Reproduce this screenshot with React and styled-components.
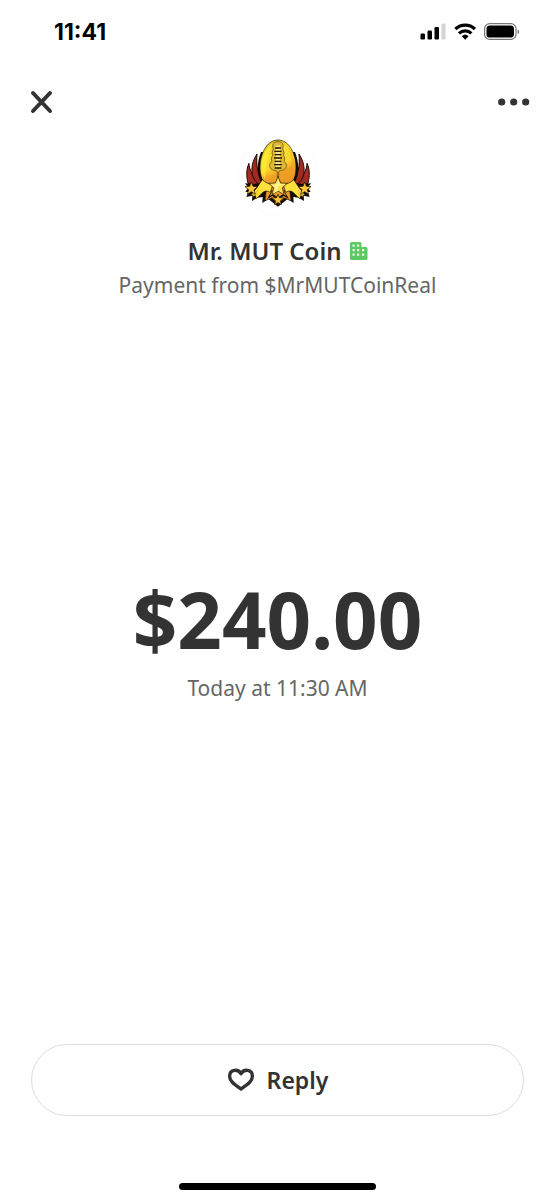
import React from 'react';
import styled, { createGlobalStyle } from 'styled-components';

const payment = {
  sender: 'Mr. MUT Coin',
  note: 'Payment from $MrMUTCoinReal',
  amount: '$240.00',
  date: 'Today at 11:30 AM',
};

const StatusIcons = () => (
  <svg width="100" height="20" viewBox="0 0 100 20" aria-hidden="true">
    <rect x="0.500" y="11.500" width="4.500" height="6" rx="1.200" />
    <rect x="7.500" y="8.500" width="4.500" height="9" rx="1.200" />
    <rect x="14.500" y="5" width="4.500" height="12.500" rx="1.200" />
    <rect x="21.500" y="1.500" width="4" height="16" rx="1.200" fill="#d4d4d4" />
    <g fill="none" stroke="#000" strokeWidth="3.200">
      <path d="M35.400 7a14.500 14.500 0 0 1 19.600 0" />
      <path d="M39 11.300a9 9 0 0 1 12.400 0" />
    </g>
    <path d="M41.800 14.200a5 5 0 0 1 6.800 0L45.200 17.800z" />
    <rect x="64.600" y="1.600" width="31.400" height="15.800" rx="5" fill="none" stroke="#777" strokeWidth="1.200" />
    <rect x="66.500" y="3.400" width="27.500" height="12.200" rx="3.400" />
    <path d="M97.600 7.200c2 1 2 4 0 5z" fill="#777" />
  </svg>
);

const FootballLogo = () => (
  <svg width="82" height="84" viewBox="0 0 246 252" aria-hidden="true">
    <defs>
      <linearGradient id="ball" x1="0.3" y1="0" x2="0.6" y2="1">
        <stop offset="0" stopColor="#dfb81c" />
        <stop offset="0.25" stopColor="#f8de2c" />
        <stop offset="0.5" stopColor="#fbd62c" />
        <stop offset="0.65" stopColor="#f2a426" />
        <stop offset="1" stopColor="#e58a1f" />
      </linearGradient>
    </defs>
    <circle cx="123" cy="125" r="119" fill="#fff" stroke="#fcf9f5" strokeWidth="2" />
    {/* side flames */}
    <g fill="#a32a20" stroke="#1d0907" strokeWidth="3" strokeLinejoin="round">
      <path d="M36 88c-9 18-8 40-3 60l30 6-4-24c-14-8-22-22-23-42z" />
      <path d="M60 60c-13 20-18 40-14 62 3 14 12 24 24 32l6-12c-14-22-19-48-16-82z" />
      <path d="M210 88c9 18 8 40 3 60l-30 6 4-24c14-8 22-22 23-42z" />
      <path d="M186 60c13 20 18 40 14 62-3 14-12 24-24 32l-6-12c14-22 19-48 16-82z" />
    </g>
    {/* dark backing with the spiked lower edge */}
    <path d="M72 54c-12 30-14 64 0 92l-20 4-28-2 10 13-9 12 9 2-6 14 18-4-1 16 16-10 16-2-1 18 18-12 29 23 29-23 18 12-1-18 16 2 16 10-1-16 18 4-6-14 9-2-9-12 10-13-28 2-20-4c14-28 12-62 0-92z" fill="#140a06" />
    {/* ball */}
    <path d="M123 18c-36 0-54 46-54 84 0 32 16 56 32 70h44c16-14 32-38 32-70 0-38-18-84-54-84z" fill="url(#ball)" stroke="#171006" strokeWidth="2" />
    <path d="M108 26c-22 14-34 46-34 74 0 14 4 26 10 36 1-16 2-36 6-54 4-20 9-38 18-56z" fill="#fff23c" opacity="0.6" />
    <path d="M150 36c12 20 16 44 12 60-14 16-34 26-54 28l-10 24 16 18h30c16-14 29-38 29-64 0-28-9-52-23-66z" fill="#ee9d25" opacity="0.5" />
    {/* laces */}
    <path d="M123 23c-14 0-18 8-14 21-4 10-5 14-2 20-5 7-5 12-2 18-8 5-9 15-4 22 5 6 14 4 20 9v16h4v-16c6-5 15-3 20-9 5-7 4-17-4-22 3-6 3-11-2-18 3-6 2-10-2-20 4-13 0-21-14-21z" fill="#dcb936" stroke="#5a4010" strokeWidth="2" />
    <g stroke="#2b1d06" strokeWidth="4">
      <path d="M114 42h18M112 52h22M113 62h20M111 72h24M113 82h20M111 92h24M113 102h20" />
    </g>
    <g stroke="#fff0a0" strokeWidth="4">
      <path d="M116 37h14M117 47h12M117 57h12M117 67h12M117 77h12M117 87h12M117 97h12" />
    </g>
    {/* lower chevrons */}
    <path d="M88 166l-4 34 20-8 19 18 19-18 20 8-4-34-35 10z" fill="#ed9926" stroke="#171006" strokeWidth="2" />
    <path d="M104 171l-14 24 16-9 17 11 17-11 16 9-14-24-19 9z" fill="#171006" />
    <path d="M108 168l-10 18 10-5 15 9 15-9 10 5-10-18z" fill="#f0a02a" />
    {/* ribbons */}
    <g fill="#ffe03c" stroke="#171006" strokeWidth="2" strokeLinejoin="round">
      <path d="M76 137c8 9 20 13 32 14l-8 24c-9-5-16-5-22 0l-20 19-4-11-13 1 18-22c7-9 11-18 17-25z" />
      <path d="M170 137c-8 9-20 13-32 14l8 24c9-5 16-5 22 0l20 19 4-11 13 1-18-22c-7-9-11-18-17-25z" />
    </g>
    <path d="M64 168l-16 18 15-6M182 168l16 18-15-6" fill="none" stroke="#efb62b" strokeWidth="3" />
    {/* stars */}
    <g stroke="#171006" strokeWidth="2" strokeLinejoin="round">
      <path d="M123 128l8 19 20 1-15 13 5 21-18-11-18 11 5-21-15-13 20-1z" fill="#ffdf50" />
      <path d="M43 144l5 13 14 1-11 9 4 14-12-8-12 8 4-14-11-9 14-1zM203 144l5 13 14 1-11 9 4 14-12-8-12 8 4-14-11-9 14-1z" fill="#ffc63a" />
      <path d="M123 180l4 11 13 1-10 8 3 12-10-7-10 7 3-12-10-8 13-1z" fill="#ffc63a" />
    </g>
    <path d="M123 136l6 15 14 1-20 5v14l-12 6 4-16-11-9 13-1z" fill="#fff28a" />
  </svg>
);

const BusinessIcon = () => (
  <svg width="18" height="20" viewBox="0 0 18 20" role="img" aria-label="Business account">
    <path d="M1.500 1H10a1.500 1.500 0 0 1 1.500 1.500V6h4.500A1.500 1.500 0 0 1 17.500 7.500v10A1.500 1.500 0 0 1 16 19H1.500A1.500 1.500 0 0 1 0 17.500v-15A1.500 1.500 0 0 1 1.500 1z" fill="#5dc961" />
    <path d="M2.500 3.500h2.200v2.200H2.500zM7 3.500h2.200v2.200H7zM2.500 8h2.200v2.200H2.500zM7 8h2.200v2.200H7zM12 8h2.200v2.200H12zM2.500 12.500h2.200v2.200H2.500zM7 12.500h2.200v2.200H7zM12 12.500h2.200v2.200H12z" fill="#e9f8ea" />
  </svg>
);

const App = () => {
  return (
    <>
      <GlobalStyle />
      <Screen>
        <StatusBar>
          <Clock>11:41</Clock>
          <StatusIcons />
        </StatusBar>
        <Toolbar>
          <IconButton aria-label="Close">
            <svg width="24" height="24" viewBox="0 0 24 24">
              <path d="M3 3l17 18M20 3L3 21" fill="none" stroke="#333" strokeWidth="4" strokeLinecap="round" />
            </svg>
          </IconButton>
          <IconButton aria-label="More options">
            <svg width="32" height="24" viewBox="0 0 32 24" fill="#333">
              <circle cx="3.700" cy="12" r="3.600" />
              <circle cx="15.700" cy="12" r="3.600" />
              <circle cx="27.700" cy="12" r="3.600" />
            </svg>
          </IconButton>
        </Toolbar>
        <Profile>
          <FootballLogo />
          <Name>
            {payment.sender}
            <BusinessIcon />
          </Name>
          <Detail>{payment.note}</Detail>
        </Profile>
        <Summary>
          <Amount>{payment.amount}</Amount>
          <Detail>{payment.date}</Detail>
        </Summary>
        <Footer>
          <ReplyButton>
            <svg width="28" height="24" viewBox="0 0 28 24" aria-hidden="true">
              <path d="M14 5.800C11.500 .800 2.600 .800 2.600 8.200c0 5 4.500 8 11.400 12.800 6.900-4.800 11.400-7.800 11.400-12.800 0-7.400-8.900-7.400-11.400-2.400z" fill="none" stroke="#333" strokeWidth="3.400" strokeLinejoin="round" />
            </svg>
            Reply
          </ReplyButton>
          <HomeIndicator />
        </Footer>
      </Screen>
    </>
  );
};

const GlobalStyle = createGlobalStyle`
  * {
    box-sizing: border-box;
  }
  body {
    margin: 0;
    background: #ffffff;
    color: #333333;
    font-family: "Noto Sans", "Open Sans", sans-serif;
  }
  svg {
    display: block;
    flex-shrink: 0;
  }
  button {
    font-family: inherit;
    color: inherit;
    cursor: pointer;
  }
`

const Screen = styled.main`
  display: flex;
  flex-direction: column;
  min-height: 100vh;
`

const StatusBar = styled.div`
  display: flex;
  align-items: center;
  justify-content: space-between;
  height: 64px;
  padding: 0 35px 0 54px;
`

const Clock = styled.span`
  color: #000000;
  font-family: Inter, sans-serif;
  font-size: 23px;
  font-weight: 700;
  line-height: 24px;
`

const Toolbar = styled.div`
  display: flex;
  align-items: center;
  justify-content: space-between;
  height: 70px;
  padding: 6px 25px 0 30px;
`

const IconButton = styled.button`
  padding: 0;
  border: none;
  background: none;
`

const Profile = styled.header`
  display: flex;
  flex-direction: column;
  align-items: center;
`

const Name = styled.h1`
  display: flex;
  align-items: center;
  gap: 8px;
  margin: 16px 0 0;
  font-size: 24px;
  font-weight: 600;
  line-height: 34px;
`

const Detail = styled.p`
  margin: 0;
  color: #666666;
  font-size: 21px;
  line-height: 34px;
`

const Summary = styled.section`
  display: flex;
  flex: 1;
  flex-direction: column;
  align-items: center;
  justify-content: center;
  gap: 8px;
  padding-bottom: 66px;
`

const Amount = styled.div`
  font-size: 78px;
  font-weight: 700;
  line-height: 88px;
`

const Footer = styled.footer`
  display: flex;
  flex-direction: column;
  align-items: center;
  padding: 0 31px 10px;
`

const ReplyButton = styled.button`
  display: flex;
  align-items: center;
  justify-content: center;
  gap: 12px;
  width: 100%;
  height: 72px;
  border: 1px solid #dddddd;
  border-radius: 36px;
  background: none;
  font-size: 23px;
  font-weight: 600;
`

const HomeIndicator = styled.div`
  width: 40%;
  height: 7px;
  margin-top: 67px;
  border-radius: 4px;
  background: #000000;
`

export default App
